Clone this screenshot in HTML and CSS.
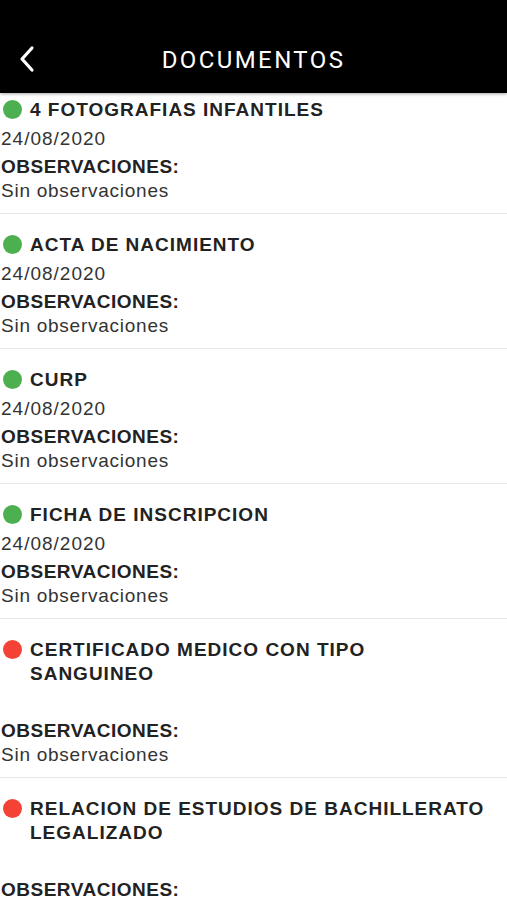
FILE: index.html
```html
<!DOCTYPE html>
<html lang="es">
<head>
  <meta charset="UTF-8" />
  <meta name="viewport" content="width=device-width, initial-scale=1.0" />
  <title>Documentos</title>
  <link rel="stylesheet" href="styles.css">
</head>
<body>
  <div class="header">
    <button class="back" aria-label="Regresar">
      <svg width="18" height="28" viewBox="0 0 18 28">
        <path d="M14 3 L4 14 L14 25" fill="none" stroke="#fff" stroke-width="3.2" stroke-linecap="round" stroke-linejoin="round"/>
      </svg>
    </button>
    <div class="title">DOCUMENTOS</div>
  </div>

  <div class="list">
    <div class="item first">
      <div class="doc-name"><span class="dot ok"></span><span>4 FOTOGRAFIAS INFANTILES</span></div>
      <div class="date">24/08/2020</div>
      <div class="obs-label">OBSERVACIONES:</div>
      <div class="obs">Sin observaciones</div>
    </div>
    <div class="item">
      <div class="doc-name"><span class="dot ok"></span><span>ACTA DE NACIMIENTO</span></div>
      <div class="date">24/08/2020</div>
      <div class="obs-label">OBSERVACIONES:</div>
      <div class="obs">Sin observaciones</div>
    </div>
    <div class="item">
      <div class="doc-name"><span class="dot ok"></span><span>CURP</span></div>
      <div class="date">24/08/2020</div>
      <div class="obs-label">OBSERVACIONES:</div>
      <div class="obs">Sin observaciones</div>
    </div>
    <div class="item">
      <div class="doc-name"><span class="dot ok"></span><span>FICHA DE INSCRIPCION</span></div>
      <div class="date">24/08/2020</div>
      <div class="obs-label">OBSERVACIONES:</div>
      <div class="obs">Sin observaciones</div>
    </div>
    <div class="item">
      <div class="doc-name"><span class="dot missing"></span><span>CERTIFICADO MEDICO CON TIPO SANGUINEO</span></div>
      <div class="date">&nbsp;</div>
      <div class="obs-label">OBSERVACIONES:</div>
      <div class="obs">Sin observaciones</div>
    </div>
    <div class="item">
      <div class="doc-name"><span class="dot missing"></span><span>RELACION DE ESTUDIOS DE BACHILLERATO LEGALIZADO</span></div>
      <div class="date">&nbsp;</div>
      <div class="obs-label">OBSERVACIONES:</div>
      <div class="obs">Sin observaciones</div>
    </div>
  </div>
</body>
</html>
```

FILE: styles.css
```css
body {
  margin: 0;
  padding: 0;
  background-color: #fff;
  font-family: "Liberation Sans", Arial, sans-serif;
  color: #222;
  overflow: hidden;
}
.header {
  height: 93px;
  background-color: #000;
  display: flex;
  align-items: flex-end;
  justify-content: center;
  position: relative;
  padding-bottom: 19px;
  box-sizing: border-box;
  box-shadow: 0 1px 3px rgba(0, 0, 0, 0.35);
  z-index: 1;
}
.header .title {
  font-family: Roboto, "Liberation Sans", sans-serif;
  color: #fff;
  font-size: 24px;
  letter-spacing: 2.4px;
  line-height: 28px;
}
.back {
  position: absolute;
  left: 18px;
  bottom: 20px;
  background: transparent;
  border: none;
  padding: 0;
  width: 20px;
  height: 28px;
  cursor: pointer;
}
.back svg {
  display: block;
}
.item {
  padding: 19px 0 10px 0;
  border-bottom: 1px solid #e8e8e8;
}
.item.first {
  padding-top: 5px;
}
.doc-name {
  display: flex;
  align-items: flex-start;
  gap: 8px;
  font-weight: bold;
  font-size: 19px;
  line-height: 24px;
  letter-spacing: 1px;
  color: #222;
  padding-left: 3px;
  padding-right: 18px;
}
.dot {
  flex: none;
  width: 19px;
  height: 19px;
  border-radius: 50%;
  margin-top: 2px;
}
.dot.ok {
  background-color: #4caf50;
}
.dot.missing {
  background-color: #f44336;
}
.date {
  margin-top: 5px;
  font-size: 19px;
  line-height: 24px;
  letter-spacing: 1px;
  color: #333;
  padding-left: 1px;
}
.obs-label {
  margin-top: 4px;
  font-weight: bold;
  font-size: 19px;
  line-height: 24px;
  letter-spacing: 0.5px;
  padding-left: 1px;
}
.obs {
  font-size: 19px;
  line-height: 24px;
  letter-spacing: 0.75px;
  color: #333;
  padding-left: 1px;
}
```
